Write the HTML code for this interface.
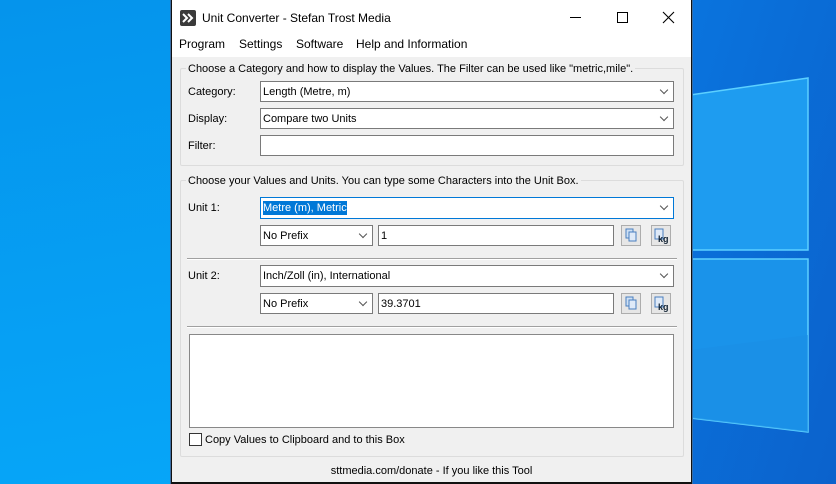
<!DOCTYPE html>
<html><head><style>
*{margin:0;padding:0;box-sizing:border-box}
body{width:836px;height:484px;overflow:hidden;position:relative;font-family:"Liberation Sans",sans-serif;font-size:11px;color:#000;background:#0a8fe8}
.a{position:absolute}
.box{position:absolute;background:#fff;border:1px solid #7a7a7a;padding-left:2px;line-height:20px;font-size:11px;white-space:nowrap}
.dd::after{content:"";position:absolute;right:6px;top:5px;width:5px;height:5px;border-right:1px solid #555;border-bottom:1px solid #555;transform:rotate(45deg)}
.lbl{position:absolute;font-size:11px}
.grp{position:absolute;border:1px solid #dcdcdc;border-radius:2px}
.btn{position:absolute;width:20px;height:21px;border:1px solid #adadad;background:#e6e6e6}
</style></head><body>
<svg class="a" style="left:0;top:0" width="836" height="484">
<defs>
<linearGradient id="bg" x1="0" y1="0" x2="0.3" y2="1"><stop offset="0" stop-color="#0594ec"/><stop offset="1" stop-color="#06a6f8"/></linearGradient>
<linearGradient id="br" x1="0" y1="0" x2="1" y2="1"><stop offset="0" stop-color="#0a74de"/><stop offset="1" stop-color="#0b62cc"/></linearGradient>
</defs>
<rect width="836" height="484" fill="url(#bg)"/>
<rect x="690" width="146" height="484" fill="url(#br)"/>
<polygon points="690,95 808,78 808,250 690,250" fill="#1e9cf0" stroke="#5cd0ff" stroke-width="1.5"/>
<polygon points="690,259 808,259 808,432 690,418" fill="#1a93ea" stroke="#5cd0ff" stroke-width="1.5"/>
<polygon points="690,350 808,335 808,432 690,418" fill="#1b8de4" opacity=".6"/>
</svg>
<div class="a" style="left:171px;top:0;width:521px;height:484px;background:#f0f0f0;border:1px solid #111;border-top:0;border-bottom:2px solid #111;outline:1px solid #3a6ea5">
 <div class="a" style="left:0;top:0;width:519px;height:57px;background:#fff"></div>
 <div class="a" style="left:8px;top:10px;width:16px;height:16px;background:#3a3a3a;border-radius:2px"><svg width="16" height="16"><path d="M3 4l4 4-4 4M8 4l4 4-4 4" stroke="#fff" stroke-width="2" fill="none"/></svg></div>
 <div class="a" style="left:30px;top:11px;font-size:12px">Unit Converter - Stefan Trost Media</div>
 <div class="a" style="left:398px;top:17px;width:11px;height:1px;background:#000"></div>
 <div class="a" style="left:445px;top:12px;width:11px;height:11px;border:1px solid #000"></div>
 <svg class="a" style="left:490px;top:11px" width="13" height="13"><path d="M1 1L12 12M12 1L1 12" stroke="#000" stroke-width="1.1"/></svg>
 <div class="a" style="left:7px;top:37px;font-size:12px">Program</div>
 <div class="a" style="left:67px;top:37px;font-size:12px">Settings</div>
 <div class="a" style="left:124px;top:37px;font-size:12px">Software</div>
 <div class="a" style="left:184px;top:37px;font-size:12px">Help and Information</div>

 <div class="grp" style="left:8px;top:68px;width:504px;height:98px"></div>
 <div class="lbl" style="left:14px;top:63px;background:#f0f0f0;padding:0 2px">Choose a Category and how to display the Values. The Filter can be used like "metric,mile".</div>
 <div class="lbl" style="left:16px;top:86px">Category:</div>
 <div class="box dd" style="left:88px;top:81px;width:414px;height:21px">Length (Metre, m)</div>
 <div class="lbl" style="left:16px;top:113px">Display:</div>
 <div class="box dd" style="left:88px;top:108px;width:414px;height:21px">Compare two Units</div>
 <div class="lbl" style="left:16px;top:140px">Filter:</div>
 <div class="box" style="left:88px;top:135px;width:414px;height:21px"></div>

 <div class="grp" style="left:8px;top:180px;width:504px;height:277px"></div>
 <div class="lbl" style="left:14px;top:175px;background:#f0f0f0;padding:0 2px">Choose your Values and Units. You can type some Characters into the Unit Box.</div>
 <div class="lbl" style="left:16px;top:202px">Unit 1:</div>
 <div class="box dd" style="left:88px;top:197px;width:414px;height:22px;border-color:#0078d7"><span style="background:#0078d7;color:#fff;line-height:14px;display:inline-block">Metre (m), Metric</span></div>
 <div class="box dd" style="left:88px;top:225px;width:113px;height:21px">No Prefix</div>
 <div class="box" style="left:206px;top:225px;width:236px;height:21px">1</div>
 <div class="btn" style="left:449px;top:225px"><svg width="18" height="19"><rect x="4" y="3" width="7" height="9" fill="#cfe0f4" stroke="#4a7fbf"/><rect x="7" y="6" width="7" height="9" fill="#dfeaf8" stroke="#4a7fbf"/></svg></div>
 <div class="btn" style="left:479px;top:225px"><svg width="18" height="19"><rect x="3" y="3" width="8" height="10" fill="#dfeaf8" stroke="#4a7fbf"/><text x="6" y="16" font-size="9" font-weight="bold" font-family="Liberation Sans" fill="#123">kg</text></svg></div>
 <div class="a" style="left:15px;top:258px;width:490px;height:2px;border-top:1px solid #a0a0a0;border-bottom:1px solid #fff"></div>
 <div class="lbl" style="left:16px;top:270px">Unit 2:</div>
 <div class="box dd" style="left:88px;top:265px;width:414px;height:22px">Inch/Zoll (in), International</div>
 <div class="box dd" style="left:88px;top:293px;width:113px;height:21px">No Prefix</div>
 <div class="box" style="left:206px;top:293px;width:236px;height:21px">39.3701</div>
 <div class="btn" style="left:449px;top:293px"><svg width="18" height="19"><rect x="4" y="3" width="7" height="9" fill="#cfe0f4" stroke="#4a7fbf"/><rect x="7" y="6" width="7" height="9" fill="#dfeaf8" stroke="#4a7fbf"/></svg></div>
 <div class="btn" style="left:479px;top:293px"><svg width="18" height="19"><rect x="3" y="3" width="8" height="10" fill="#dfeaf8" stroke="#4a7fbf"/><text x="6" y="16" font-size="9" font-weight="bold" font-family="Liberation Sans" fill="#123">kg</text></svg></div>
 <div class="a" style="left:15px;top:326px;width:490px;height:2px;border-top:1px solid #a0a0a0;border-bottom:1px solid #fff"></div>
 <div class="box" style="left:17px;top:334px;width:485px;height:94px;border-color:#888"></div>
 <div class="a" style="left:17px;top:433px;width:13px;height:13px;background:#fff;border:1px solid #333"></div>
 <div class="lbl" style="left:33px;top:434px">Copy Values to Clipboard and to this Box</div>
 <div class="lbl" style="left:0;width:519px;text-align:center;top:465px">sttmedia.com/donate - If you like this Tool</div>
</div>
</body></html>
